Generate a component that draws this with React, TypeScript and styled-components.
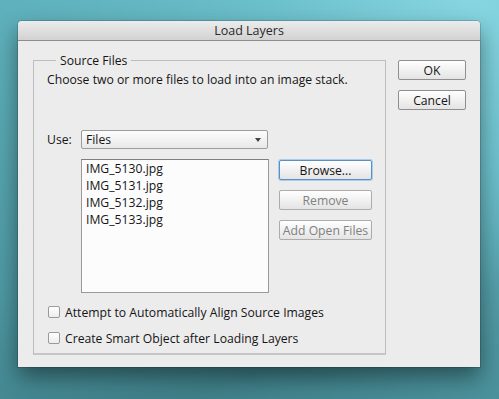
import React from "react";
import styled, { createGlobalStyle } from "styled-components";

const Global = createGlobalStyle`
  html, body { margin: 0; padding: 0; }
  body {
    width: 499px;
    height: 399px;
    overflow: hidden;
    font-family: "Lucida Grande", "Open Sans", "DejaVu Sans", sans-serif;
    background:
      radial-gradient(ellipse at 95% 0%, #86d6e1 0%, #6cc0cc 30%, transparent 70%),
      linear-gradient(160deg, #5fb2bd 0%, #4e98a2 50%, #3f7f88 80%, #4b929c 100%);
  }
`;

const Desktop = styled.div`
  width: 499px;
  height: 399px;
  box-sizing: border-box;
  padding: 21px 0 0 18px;
`;

const Window = styled.div`
  width: 462px;
  height: 346px;
  background: #ececec;
  border-radius: 4px 4px 0 0;
  box-shadow: 0 10px 22px rgba(0, 0, 0, 0.45), 0 0 0 1px rgba(0, 0, 0, 0.15);
  display: flex;
  flex-direction: column;
  color: #151515;
  font-size: 12.2px;
`;

const TitleBar = styled.div`
  height: 19px;
  border-bottom: 1px solid #8e8e8e;
  border-radius: 4px 4px 0 0;
  background: linear-gradient(#ececec, #d2d2d2);
  display: flex;
  align-items: center;
  justify-content: center;
  font-size: 12.5px;
  color: #2a2a2a;
`;

const Body = styled.div`
  display: flex;
  gap: 12px;
  padding: 12px 15px 0 15px;
`;

const Group = styled.fieldset`
  margin: 0;
  width: 352px;
  box-sizing: border-box;
  border: 1px solid #bdbdbd;
  border-bottom: 2px solid #c6c6c6;
  padding: 0 13px 7px 13px;
  display: flex;
  flex-direction: column;
`;

const Legend = styled.legend`
  padding: 0 4px;
  margin-left: 9px;
  line-height: 15px;
`;

const Description = styled.div`
  margin-top: 4px;
  line-height: 16px;
`;

const UseRow = styled.div`
  display: flex;
  align-items: center;
  margin-top: 42px;
  height: 19px;
`;

const Label = styled.span`
  width: 34px;
`;

const Select = styled.div`
  width: 187px;
  height: 19px;
  box-sizing: border-box;
  border: 1px solid #9c9c9c;
  border-radius: 2px;
  background: linear-gradient(#fdfdfd, #e8e8e8);
  display: flex;
  align-items: center;
  justify-content: space-between;
  padding: 0 6px 0 4px;
`;

const Arrow = styled.span`
  width: 0;
  height: 0;
  border-left: 3.5px solid transparent;
  border-right: 3.5px solid transparent;
  border-top: 4px solid #444;
`;

const ListRow = styled.div`
  display: flex;
  gap: 10px;
  margin-top: 10px;
  padding-left: 34px;
`;

const FileList = styled.div`
  width: 188px;
  height: 134px;
  box-sizing: border-box;
  border: 1px solid #9a9a9a;
  border-top-color: #7f7f7f;
  background: #fcfcfc;
  padding: 0 4px;
  display: flex;
  flex-direction: column;
`;

const FileItem = styled.div`
  line-height: 17px;
`;

const SideButtons = styled.div`
  display: flex;
  flex-direction: column;
  gap: 10px;
  padding-top: 1px;
`;

const Button = styled.button<{ $focus?: boolean; $width: number }>`
  width: ${(p) => p.$width}px;
  height: 20px;
  box-sizing: border-box;
  margin: 0;
  padding: 0;
  font: inherit;
  font-size: 12.2px;
  color: ${(p) => (p.disabled ? "#808080" : "#151515")};
  background: linear-gradient(#ffffff, #e4e4e4);
  border: 1px solid ${(p) => (p.$focus ? "#5c8fc0" : p.disabled ? "#acacac" : "#8f8f8f")};
  border-radius: 2px;
  box-shadow: ${(p) => (p.$focus ? "0 0 0 1px #a9cdef" : "none")};
  display: flex;
  align-items: center;
  justify-content: center;
  white-space: nowrap;
`;

const ButtonColumn = styled.div`
  display: flex;
  flex-direction: column;
  gap: 10px;
  padding-top: 7px;
`;

const Checks = styled.div`
  display: flex;
  flex-direction: column;
  gap: 10px;
  margin-top: 11px;
  padding-left: 1px;
`;

const CheckRow = styled.label`
  display: flex;
  align-items: center;
  gap: 5px;
  height: 16px;
`;

const Box = styled.span`
  width: 12px;
  height: 12px;
  box-sizing: border-box;
  border: 1px solid #9a9a9a;
  border-radius: 2px;
  background: linear-gradient(#ffffff, #ececec);
`;

const files = ["IMG_5130.jpg", "IMG_5131.jpg", "IMG_5132.jpg", "IMG_5133.jpg"];

export default function App() {
  return (
    <>
      <Global />
      <Desktop>
        <Window>
          <TitleBar>Load Layers</TitleBar>
          <Body>
            <Group>
              <Legend>Source Files</Legend>
              <Description>Choose two or more files to load into an image stack.</Description>
              <UseRow>
                <Label>Use:</Label>
                <Select>
                  <span>Files</span>
                  <Arrow />
                </Select>
              </UseRow>
              <ListRow>
                <FileList>
                  {files.map((f) => (
                    <FileItem key={f}>{f}</FileItem>
                  ))}
                </FileList>
                <SideButtons>
                  <Button $width={93} $focus>Browse...</Button>
                  <Button $width={93} disabled>Remove</Button>
                  <Button $width={93} disabled>Add Open Files</Button>
                </SideButtons>
              </ListRow>
              <Checks>
                <CheckRow>
                  <Box />
                  Attempt to Automatically Align Source Images
                </CheckRow>
                <CheckRow>
                  <Box />
                  Create Smart Object after Loading Layers
                </CheckRow>
              </Checks>
            </Group>
            <ButtonColumn>
              <Button $width={68}>OK</Button>
              <Button $width={68}>Cancel</Button>
            </ButtonColumn>
          </Body>
        </Window>
      </Desktop>
    </>
  );
}
